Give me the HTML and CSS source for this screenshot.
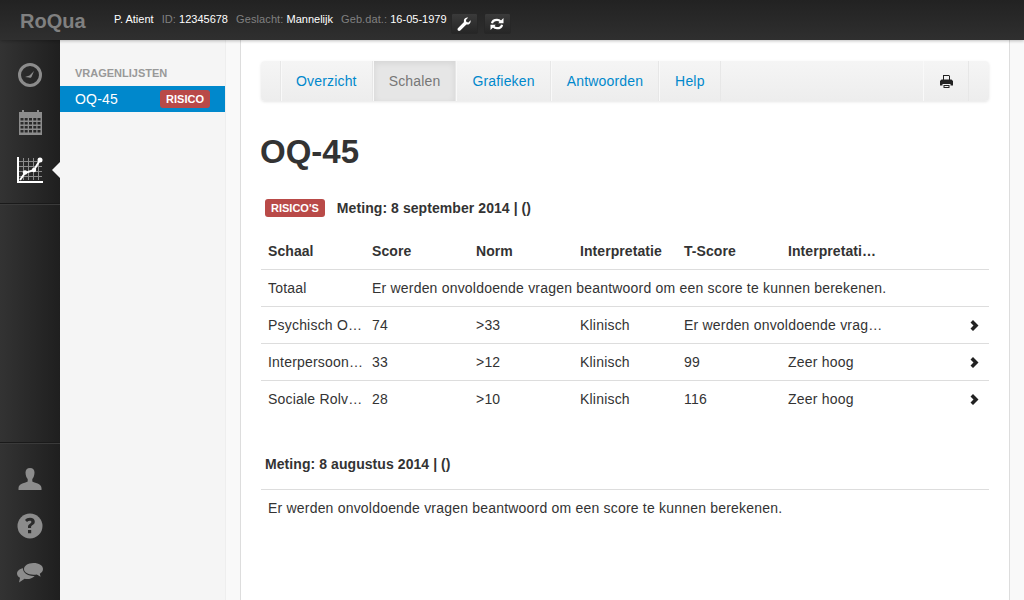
FILE: index.html
```html
<!DOCTYPE html>
<html lang="en">
<head>
    <meta charset="UTF-8">
    <title>RoQua</title>
    <link rel="stylesheet" href="styles.css">
</head>
<body>
    <header class="topbar">
        <div class="brand">RoQua</div>
        <div class="patient">
            <span class="val">P. Atient</span>
            <span class="lbl">ID:</span> <span class="val">12345678</span>
            <span class="lbl">Geslacht:</span> <span class="val">Mannelijk</span>
            <span class="lbl">Geb.dat.:</span> <span class="val">16-05-1979</span>
        </div>
        <button class="top-btn">
            <svg width="14" height="14" viewBox="0 0 14 14"><path fill="#fff" d="M13.600 3.200c.3 1.400-.1 2.700-1 3.500-.9.800-2.100 1.100-3.200.8L3.300 13.500c-.7.600-1.700.6-2.300 0-.7-.7-.6-1.700.1-2.400L7 5c-.4-1.200-.1-2.500.8-3.400C8.700.7 10 .3 11.200.6L8.900 2.900l.5 2 2 .5z"/></svg>
        </button>
        <button class="top-btn">
            <svg width="14" height="14" viewBox="0 0 14 14"><path fill="none" stroke="#fff" stroke-width="2.200" d="M2 6.300C2.400 4 4.400 2.800 7 2.800c1.600 0 2.800.7 3.700 1.700M12 7.700c-.4 2.300-2.400 3.500-5 3.500-1.600 0-2.800-.7-3.700-1.700"/><path fill="#fff" d="M13.500 1v5.300H8.200zM.5 13V7.700h5.300z"/></svg>
        </button>
    </header>

    <div class="layout">
        <nav class="sidebar">
            <div class="side-top">
                <a class="side-icon">
                    <svg width="24" height="24" viewBox="0 0 24 24"><circle cx="12" cy="12" r="10.500" fill="none" stroke="#8c8c8c" stroke-width="3"/><path fill="#8c8c8c" d="M16 8 13.500 14a2 2 0 0 1-2.500 .6L7 14l4.500-1.500z"/></svg>
                </a>
                <a class="side-icon">
                    <svg width="23" height="25" viewBox="0 0 23 25"><path fill="#8c8c8c" fill-rule="evenodd" d="M0 2h3V0h2v2h13V0h2v2h3v23H0zM1.500 8v2.500h3V8zm4.200 0v2.500h3V8zm4.300 0v2.500h3V8zm4.300 0v2.500h3V8zm4.200 0v2.500h3V8zM1.500 12v2.500h3V12zm4.200 0v2.500h3V12zm4.300 0v2.500h3V12zm4.300 0v2.500h3V12zm4.200 0v2.500h3V12zM1.500 16v2.500h3V16zm4.200 0v2.500h3V16zm4.300 0v2.500h3V16zm4.300 0v2.500h3V16zm4.200 0v2.500h3V16zM1.500 20v2.500h3V20zm4.200 0v2.500h3V20zm4.300 0v2.500h3V20zm4.300 0v2.500h3V20zm4.200 0v2.500h3V20z"/></svg>
                </a>
                <a class="side-icon active">
                    <svg width="26" height="26" viewBox="0 0 26 26"><path stroke="#8c8c8c" fill="none" d="M6.500 1v22M11.500 1v22M16.500 1v22M21.500 1v22M2 4.500h23M2 9.500h23M2 14.500h23M2 19.500h23"/><path fill="#fff" d="M0 0h2v24h24v2H0z"/><path stroke="#fff" stroke-width="2" fill="none" d="M3 23l5-7 9-3 6-10"/><circle cx="8" cy="15.500" r="2.200" fill="#fff"/><circle cx="17" cy="13" r="2.200" fill="#fff"/><circle cx="23" cy="3" r="2.500" fill="#fff"/></svg>
                </a>
            </div>
            <div class="side-bottom">
                <a class="side-icon">
                    <svg width="24" height="24" viewBox="0 0 24 24"><path fill="#8c8c8c" d="M12 1c3 0 4.500 1.800 4.500 4.500 0 2.800-1.100 5.500-2.200 6.500v2.500c2 1.200 9.200 2 9.200 6.500V23H.5v-2c0-4.500 7.200-5.300 9.200-6.500V12C8.600 11 7.500 8.300 7.500 5.500 7.500 2.800 9 1 12 1z"/></svg>
                </a>
                <a class="side-icon">
                    <svg width="26" height="26" viewBox="0 0 26 26"><circle cx="13" cy="13" r="12.500" fill="#8c8c8c"/><path fill="#2a2a2a" d="M11 15v-1.500c0-2.500 3.400-2.700 3.400-4.500 0-.8-.7-1.300-1.600-1.300-1 0-2 .5-2.800 1.300L8 7c1.200-1.400 2.900-2.200 5-2.200 2.900 0 4.800 1.600 4.800 4 0 3.200-3.700 3.300-3.700 5.200v1zM11 17h3.200v3.200H11z"/></svg>
                </a>
                <a class="side-icon">
                    <svg width="26" height="20" viewBox="0 0 26 20"><path fill="#8c8c8c" d="M16.500 0C22 0 26 2.500 26 6c0 2-1.200 3.700-3.200 4.700l.8 3-3.800-2.300c-1 .2-2 .3-3.300.3C11 11.700 7 9.200 7 6s4-6 9.500-6z"/><path fill="#8c8c8c" d="M6 5.200C5.600 8.800 9.800 13 16.500 13l1.200-.1C16 15 13 16 10 16c-.8 0-1.600-.1-2.400-.2L2 19.500l1-4.700C1.200 13.800 0 12.300 0 10.500c0-2.500 2.400-4.500 6-5.300z"/></svg>
                </a>
            </div>
        </nav>

        <aside class="list">
            <h5>Vragenlijsten</h5>
            <a class="list-item"><span>OQ-45</span><span class="badge">RISICO</span></a>
        </aside>

        <div class="gutter"></div>

        <main class="main">
            <div class="tabs">
                <div class="tab-spacer"></div>
                <a class="tab">Overzicht</a>
                <a class="tab active">Schalen</a>
                <a class="tab">Grafieken</a>
                <a class="tab">Antwoorden</a>
                <a class="tab">Help</a>
                <a class="tab print">
                    <svg width="13" height="13" viewBox="0 0 13 13"><path fill="#222" fill-rule="evenodd" d="M3 0h6l1 1v3.500h1.500L13 6v4.500h-2.500V9h-8v1.500H0V6l1.500-1.500H3zm1 1v3.500h5V1zM3.500 10h6v3h-6zm1 1v1h4v-1z"/></svg>
                </a>
                <div class="tab-end"></div>
            </div>

            <h1>OQ-45</h1>

            <h2 class="meting"><span class="badge risks">RISICO'S</span>Meting: 8 september 2014 | ()</h2>
            <table class="scores">
                <thead>
                    <tr><th>Schaal</th><th>Score</th><th>Norm</th><th>Interpretatie</th><th>T-Score</th><th>Interpretati…</th><th class="arrow"></th></tr>
                </thead>
                <tbody>
                    <tr><td>Totaal</td><td colspan="6">Er werden onvoldoende vragen beantwoord om een score te kunnen berekenen.</td></tr>
                    <tr><td>Psychisch O…</td><td>74</td><td>&gt;33</td><td>Klinisch</td><td colspan="2">Er werden onvoldoende vrag…</td><td class="arrow"><svg class="chev" viewBox="0 0 9 11"><path d="M3 0 8.500 5.500 3 11 .5 8.500 3.500 5.500 .5 2.500z"/></svg></td></tr>
                    <tr><td>Interpersoon…</td><td>33</td><td>&gt;12</td><td>Klinisch</td><td>99</td><td>Zeer hoog</td><td class="arrow"><svg class="chev" viewBox="0 0 9 11"><path d="M3 0 8.500 5.500 3 11 .5 8.500 3.500 5.500 .5 2.500z"/></svg></td></tr>
                    <tr><td>Sociale Rolv…</td><td>28</td><td>&gt;10</td><td>Klinisch</td><td>116</td><td>Zeer hoog</td><td class="arrow"><svg class="chev" viewBox="0 0 9 11"><path d="M3 0 8.500 5.500 3 11 .5 8.500 3.500 5.500 .5 2.500z"/></svg></td></tr>
                </tbody>
            </table>

            <h2 class="meting second">Meting: 8 augustus 2014 | ()</h2>
            <p class="note">Er werden onvoldoende vragen beantwoord om een score te kunnen berekenen.</p>
        </main>

        <div class="right-strip"></div>
    </div>
</body>
</html>
```

FILE: styles.css
```css
* {
    box-sizing: border-box;
}
html, body {
    height: 100%;
}
body {
    margin: 0;
    font-family: "Liberation Sans", Arial, sans-serif;
    font-size: 14px;
    letter-spacing: 0.2px;
    color: #333;
    display: flex;
    flex-direction: column;
    overflow: hidden;
}
a {
    text-decoration: none;
}

/* top bar */
.topbar {
    height: 40px;
    flex: none;
    background: linear-gradient(#222, #2f2f2f);
    display: flex;
    align-items: flex-start;
    box-shadow: 0 1px 3px rgba(0, 0, 0, 0.25);
    position: relative;
    z-index: 2;
}
.brand {
    margin: 10px 0 0 20px;
    width: 94px;
    font-size: 20px;
    line-height: 23px;
    font-weight: bold;
    letter-spacing: 0;
    color: #808080;
}
.patient {
    font-size: 11px;
    line-height: 14px;
    letter-spacing: 0;
    margin-top: 12px;
    color: #fff;
    white-space: nowrap;
}
.patient .lbl {
    color: #808080;
    letter-spacing: 0.1px;
    margin-left: 5px;
}
.top-btn {
    width: 27px;
    height: 21px;
    margin: 13px 0 0 4px;
    padding: 0;
    border: 1px solid #272727;
    border-radius: 2px;
    background: linear-gradient(#3a3a3a, #262626);
    display: flex;
    align-items: center;
    justify-content: center;
}
.top-btn + .top-btn {
    margin-left: 6px;
}

/* columns */
.layout {
    flex: 1;
    display: flex;
    min-height: 0;
}
.sidebar {
    width: 60px;
    flex: none;
    background: linear-gradient(to right, #333, #1f1f1f);
    display: flex;
    flex-direction: column;
    justify-content: space-between;
}
.side-top {
    padding-top: 22px;
    height: 164px;
    border-bottom: 1px solid #1a1a1a;
    box-shadow: 0 1px 0 #3a3a3a;
}
.side-bottom {
    height: 157px;
    padding-top: 22px;
    border-top: 1px solid #3a3a3a;
    box-shadow: 0 -1px 0 #1a1a1a;
}
.side-icon {
    display: flex;
    justify-content: center;
    align-items: center;
    height: 26px;
    margin-bottom: 21.500px;
    position: relative;
}
.side-bottom .side-icon {
    margin-bottom: 21px;
}
.side-icon.active::after {
    content: "";
    position: absolute;
    right: 0;
    top: 5px;
    border: 8px solid transparent;
    border-right-color: #f5f5f5;
    border-left-width: 0;
}
.list {
    width: 165px;
    flex: none;
    background: #f5f5f5;
    padding-top: 27px;
}
.list h5 {
    margin: 0 0 7px 15px;
    font-size: 11px;
    line-height: 12px;
    font-weight: bold;
    letter-spacing: 0;
    color: #999;
    text-transform: uppercase;
}
.list-item {
    display: flex;
    justify-content: space-between;
    align-items: center;
    height: 26px;
    padding: 0 15px;
    background: #0088cc;
    color: #fff;
}
.badge {
    display: inline-block;
    background: #b94a48;
    color: #fff;
    font-size: 11px;
    font-weight: bold;
    letter-spacing: 0;
    line-height: 14px;
    padding: 2px 6px 2px;
    border-radius: 3px;
}
.gutter {
    width: 16px;
    flex: none;
    background: #f9f9f9;
    border-left: 1px solid #eee;
    border-right: 1px solid #ddd;
}
.main {
    width: 768px;
    flex: none;
    padding: 21px 20px 0;
    background: #fff;
}
.right-strip {
    flex: 1;
    background: #f9f9f9;
    border-left: 1px solid #ddd;
}

/* tabs */
.tabs {
    display: flex;
    height: 40px;
    background: linear-gradient(#f5f5f5, #ededed);
    border-radius: 4px;
    box-shadow: 0 1px 3px rgba(0, 0, 0, 0.1);
}
.tab-spacer {
    width: 20px;
    border-right: 1px solid #e7e7e7;
}
.tab {
    line-height: 40px;
    padding: 0 15px 0 14px;
    letter-spacing: 0.17px;
    color: #0088cc;
    border-left: 1px solid #f9f9f9;
    border-right: 1px solid #e7e7e7;
}
.tab + .tab {
    padding-left: 15px;
}
.tab.active {
    color: #777;
    background: #e6e6e6;
    box-shadow: inset 0 2px 6px rgba(0, 0, 0, 0.08);
}
.tab.print {
    margin-left: auto;
    width: 46px;
    padding: 0;
    display: flex;
    align-items: center;
    justify-content: center;
}
.tab-end {
    width: 20px;
}

h1 {
    margin: 31px 0 0 -1px;
    font-size: 33px;
    line-height: 40px;
    font-weight: bold;
    letter-spacing: 0;
}
.meting {
    margin: 26px 0 0 4px;
    font-size: 14px;
    line-height: 20px;
    font-weight: bold;
    letter-spacing: 0.07px;
    display: flex;
    align-items: center;
}
.badge.risks {
    font-size: 11px;
    padding: 2px 6px;
    margin-right: 12px;
}
.meting.second {
    margin-top: 37px;
}

/* table */
.scores {
    width: 100%;
    margin-top: 15px;
    border-collapse: collapse;
    table-layout: fixed;
}
.scores th, .scores td {
    width: 104px;
    padding: 8px 7px;
    line-height: 20px;
    text-align: left;
    vertical-align: top;
    white-space: nowrap;
    overflow: hidden;
}
.scores th {
    letter-spacing: 0.07px;
}
.scores th.arrow, .scores td.arrow {
    width: 104px;
    padding-right: 10px;
    text-align: right;
}
.scores td {
    border-top: 1px solid #ddd;
}
.chev {
    width: 9px;
    height: 11px;
    fill: #222;
    display: inline-block;
    vertical-align: -1px;
}
.note {
    margin: 15px 0 0;
    padding: 8px 7px;
    line-height: 20px;
    border-top: 1px solid #ddd;
}
```
